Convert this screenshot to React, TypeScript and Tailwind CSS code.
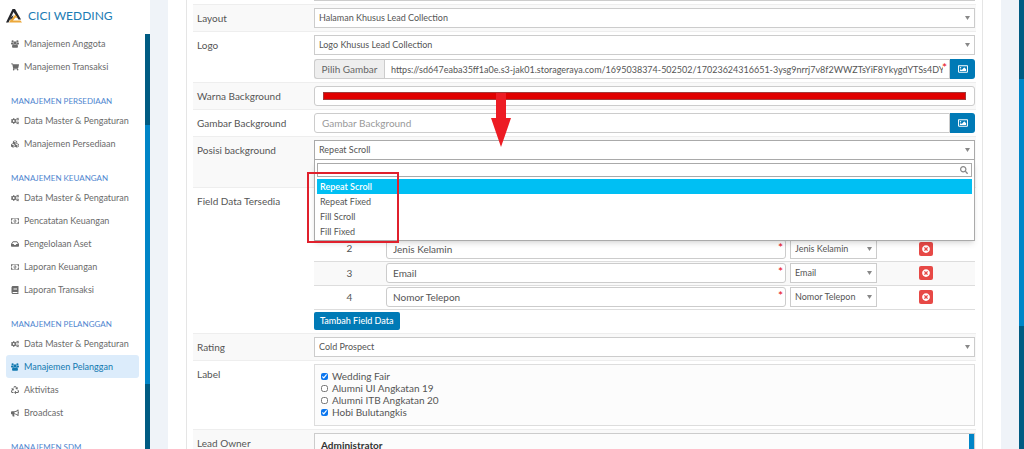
import React from "react";
import {
  FaBook,
  FaBullhorn,
  FaCogs,
  FaCubes,
  FaInbox,
  FaRecycle,
  FaRegImage,
  FaSearch,
  FaShoppingCart,
  FaTimesCircle,
} from "react-icons/fa";

interface IconProps {
  className?: string;
}

interface MenuItem {
  label: string;
  icon: React.ComponentType<IconProps>;
  active?: boolean;
}

interface MenuGroup {
  title?: string;
  items: MenuItem[];
}

const GroupIcon: React.FC<IconProps> = ({ className }) => (
  <svg viewBox="0 0 1920 1792" className={className} fill="currentColor">
    <path d="M593 896q-162 5-265 128h-134q-82 0-138-40.5t-56-118.5q0-353 124-353 6 0 43.500 21t97.500 42.500 119 21.500q67 0 133-23-5 37-5 66 0 139 81 256zm1071 637q0 120-73 189.500t-194 69.500h-874q-121 0-194-69.500t-73-189.500q0-53 3.500-103.500t14-109 26.500-108.500 43-97.500 62-81 85.500-53.500 111.500-20q10 0 43 21.500t73 48 107 48 135 21.500 135-21.500 107-48 73-48 43-21.500q61 0 111.500 20t85.500 53.500 62 81 43 97.500 26.500 108.500 14 109 3.500 103.500zm-1024-1277q0 106-75 181t-181 75-181-75-75-181 75-181 181-75 181 75 75 181zm704 384q0 159-112.500 271.500t-271.500 112.500-271.500-112.500-112.500-271.500 112.500-271.500 271.500-112.500 271.500 112.500 112.500 271.500zm576 225q0 78-56 118.500t-138 40.500h-134q-103-123-265-128 81-117 81-256 0-29-5-66 66 23 133 23 59 0 119-21.500t97.500-42.500 43.500-21q124 0 124 353zm-128-609q0 106-75 181t-181 75-181-75-75-181 75-181 181-75 181 75 75 181z" />
  </svg>
);

const MoneyIcon: React.FC<IconProps> = ({ className }) => (
  <svg viewBox="0 0 1920 1792" className={className} fill="currentColor">
    <path d="M768 1152h384v-96h-128v-448h-114l-148 137 77 80q42-37 55-57h2v288h-128v96zm512-256q0 70-21 142t-59.500 134-101.500 101-138 39-138-39-101.500-101-59.500-134-21-142 21-142 59.500-134 101.500-101 138-39 138 39 101.500 101 59.500 134 21 142zm512 256v-512q-106 0-181-75t-75-181h-1152q0 106-75 181t-181 75v512q106 0 181 75t75 181h1152q0-106 75-181t181-75zm128-832v1152q0 26-19 45t-45 19h-1792q-26 0-45-19t-19-45v-1152q0-26 19-45t45-19h1792q26 0 45 19t19 45z" />
  </svg>
);

const menu: MenuGroup[] = [
  {
    items: [
      { label: "Manajemen Anggota", icon: GroupIcon },
      { label: "Manajemen Transaksi", icon: FaShoppingCart },
    ],
  },
  {
    title: "MANAJEMEN PERSEDIAAN",
    items: [
      { label: "Data Master & Pengaturan", icon: FaCogs },
      { label: "Manajemen Persediaan", icon: FaCubes },
    ],
  },
  {
    title: "MANAJEMEN KEUANGAN",
    items: [
      { label: "Data Master & Pengaturan", icon: FaCogs },
      { label: "Pencatatan Keuangan", icon: MoneyIcon },
      { label: "Pengelolaan Aset", icon: FaInbox },
      { label: "Laporan Keuangan", icon: MoneyIcon },
      { label: "Laporan Transaksi", icon: FaBook },
    ],
  },
  {
    title: "MANAJEMEN PELANGGAN",
    items: [
      { label: "Data Master & Pengaturan", icon: FaCogs },
      { label: "Manajemen Pelanggan", icon: GroupIcon, active: true },
      { label: "Aktivitas", icon: FaRecycle },
      { label: "Broadcast", icon: FaBullhorn },
    ],
  },
  { title: "MANAJEMEN SDM", items: [] },
];

const fields = [
  { no: 2, name: "Jenis Kelamin", type: "Jenis Kelamin" },
  { no: 3, name: "Email", type: "Email" },
  { no: 4, name: "Nomor Telepon", type: "Nomor Telepon" },
];

const labels = [
  { name: "Wedding Fair", checked: true },
  { name: "Alumni UI Angkatan 19", checked: false },
  { name: "Alumni ITB Angkatan 20", checked: false },
  { name: "Hobi Bulutangkis", checked: true },
];

const positions = ["Repeat Scroll", "Repeat Fixed", "Fill Scroll", "Fill Fixed"];

const imageUrl =
  "https://sd647eaba35ff1a0e.s3-jak01.storageraya.com/1695038374-502502/17023624316651-3ysg9nrrj7v8f2WWZTsYiF8YkygdYTSs4DY";

const Logo = () => (
  <svg viewBox="0 0 32 28" className="h-[14px] w-4" aria-hidden="true">
    <path d="M13 0 H18 L30 21 H25 L15 6 L5 27 H0 Z" fill="#25262b" />
    <path d="M9 22 L19 11 L23 18 L19 17 L14 23 H29 L32 27 H6 Z" fill="#eca83a" />
    <path d="M9 17 L15 12 L13 18 L8 22 Z" fill="#25262b" />
  </svg>
);

const Sidebar = () => (
  <aside className="flex w-[150px] shrink-0 bg-white">
    <div className="min-w-0 flex-1 px-[6px]">
      <a href="#" className="flex h-8 items-center gap-[6px] text-[#1c7cb4]">
        <Logo />
        <span className="whitespace-nowrap text-[12px]">CICI WEDDING</span>
      </a>
      <nav>
        {menu.map((group, i) => (
          <div key={i}>
            {group.title && (
              <h2 className="h-[31px] whitespace-nowrap pl-[5px] pt-4 text-[8px] leading-[14px] text-[#4f86cf]">
                {group.title}
              </h2>
            )}
            {group.items.map((item) => (
              <a
                key={item.label}
                href="#"
                className={`flex h-[23px] items-center gap-[5px] whitespace-nowrap rounded-[3px] pl-[5px] text-[9px] ${
                  item.active ? "bg-[#dcecfb] text-[#1279b0]" : "text-[#6b6b6b]"
                }`}
              >
                <item.icon className="size-2 shrink-0" />
                {item.label}
              </a>
            ))}
          </div>
        ))}
      </nav>
    </div>
    <div className="flex w-[5px] flex-col pt-[34px]">
      <div className="h-[91px] bg-[#005b82]" />
      <div className="h-[259px] bg-[#0085c7]" />
      <div className="flex-1 bg-[#005b82]" />
    </div>
  </aside>
);

interface SelectProps {
  id?: string;
  label?: string;
  options: string[];
  border?: string;
}

const Select: React.FC<SelectProps> = ({
  id,
  label,
  options,
  border = "border-[#ccc]",
}) => (
  <div className="relative">
    <select
      id={id}
      aria-label={label}
      className={`block h-5 w-full appearance-none border bg-white pl-1 pr-4 text-[9px] text-[#555] ${border}`}
    >
      {options.map((o) => (
        <option key={o}>{o}</option>
      ))}
    </select>
    <span className="pointer-events-none absolute inset-y-0 right-[5px] flex items-center">
      <svg viewBox="0 0 5 4" className="h-1 w-[5px]" aria-hidden="true">
        <path d="M0 0 H5 L2.5 4 Z" fill="#888" />
      </svg>
    </span>
  </div>
);

interface RowProps {
  label: string;
  htmlFor?: string;
  striped?: boolean;
  className?: string;
  children: React.ReactNode;
}

const Row: React.FC<RowProps> = ({
  label,
  htmlFor,
  striped,
  className = "pb-[3px]",
  children,
}) => (
  <div
    className={`flex border-t border-[#eee] pr-px pt-[3px] ${
      striped ? "bg-[#f9f9f9]" : ""
    } ${className}`}
  >
    <label
      htmlFor={htmlFor}
      className="w-[121px] shrink-0 pl-1 text-[10px] leading-5 text-[#555]"
    >
      {label}
    </label>
    <div className="min-w-0 flex-1">{children}</div>
  </div>
);

const Required = () => (
  <span className="absolute right-[3px] top-[3px] text-[12px] leading-3 text-red-600">
    *
  </span>
);

const ImageButton = () => (
  <button
    type="button"
    aria-label="Pilih gambar"
    className="flex h-5 w-[25px] shrink-0 items-center justify-center rounded-r-[3px] bg-[#007ab6] text-white"
  >
    <FaRegImage className="size-[10px]" />
  </button>
);

const PositionDropdown = () => (
  <div className="absolute inset-x-0 top-full z-10 border border-t-0 border-[#aaa] bg-white px-[2px] pb-px pt-[3px] shadow-md">
    <div className="relative">
      <input
        aria-label="Cari posisi"
        className="block h-[14px] w-full border border-[#aaa] pl-1 pr-4 text-[9px] outline-none"
      />
      <FaSearch className="absolute right-1 top-[3px] size-2 text-[#888]" />
    </div>
    <ul className="mt-[2px]">
      {positions.map((p, i) => (
        <li
          key={p}
          className={`h-[15px] px-[3px] text-[9px] leading-[15px] ${
            i === 0 ? "bg-[#00bff3] font-semibold text-white" : "text-[#555]"
          }`}
        >
          {p}
        </li>
      ))}
    </ul>
    <div className="absolute -left-2 top-3 h-[71px] w-[92px] border-2 border-[#e0202c]" />
  </div>
);

const FieldTable = () => (
  <table className="mt-[46px] w-full table-fixed border-collapse text-[10px] text-[#555]">
    <colgroup>
      <col className="w-[71px]" />
      <col />
      <col className="w-[90px]" />
      <col className="w-[98px]" />
    </colgroup>
    <tbody>
      {fields.map((f) => (
        <tr
          key={f.no}
          className="h-6 border-b border-[#ddd] even:bg-[#f9f9f9]"
        >
          <td className="p-0 text-center">{f.no}</td>
          <td className="px-px py-0">
            <div className="relative">
              <input
                aria-label={`Nama field ${f.no}`}
                defaultValue={f.name}
                className="block h-5 w-full rounded-[3px] border border-[#ccc] bg-white px-[6px]"
              />
              <Required />
            </div>
          </td>
          <td className="py-0 pl-[3px] pr-0">
            <Select label={`Tipe field ${f.no}`} options={[f.type]} />
          </td>
          <td className="p-0">
            <button
              type="button"
              aria-label={`Hapus ${f.name}`}
              className="mx-auto flex size-[14px] items-center justify-center rounded-[2px] bg-[#e74946] text-white"
            >
              <FaTimesCircle className="size-2" />
            </button>
          </td>
        </tr>
      ))}
    </tbody>
  </table>
);

const LeadForm = () => (
  <form className="border-x border-[#e5e5e5] px-[6px]">
    <div className="flex pb-[3px] pl-[121px] pr-px">
      <div className="h-px flex-1 bg-[#ccc]" />
    </div>
    <Row label="Layout" htmlFor="layout" striped>
      <Select id="layout" options={["Halaman Khusus Lead Collection"]} />
    </Row>
    <Row label="Logo" htmlFor="logo">
      <Select id="logo" options={["Logo Khusus Lead Collection"]} />
      <div className="mt-1 flex text-[10px]">
        <label
          htmlFor="logo-url"
          className="h-5 w-[70px] shrink-0 rounded-l-[3px] border border-r-0 border-[#ccc] bg-[#eee] text-center leading-[18px] text-[#666]"
        >
          Pilih Gambar
        </label>
        <div className="relative min-w-0 flex-1">
          <input
            id="logo-url"
            defaultValue={imageUrl}
            className="block h-5 w-full border border-[#ccc] px-[6px] text-[9px] text-[#555]"
          />
          <Required />
        </div>
        <ImageButton />
      </div>
    </Row>
    <Row label="Warna Background" htmlFor="warna" striped>
      <div className="relative">
        <input
          id="warna"
          type="color"
          defaultValue="#e00000"
          className="block h-5 w-full rounded-[3px] border border-[#ccc] bg-white px-2 py-[5px] [&::-webkit-color-swatch-wrapper]:p-0 [&::-webkit-color-swatch]:border-[#a03c3c]"
        />
        <svg
          viewBox="0 0 20 54"
          className="absolute left-[28%] top-[7px] z-20 h-[54px] w-5 -translate-x-2"
          aria-hidden="true"
        >
          <path d="M5 0 H15 V25 H20 L10 54 L0 25 H5 Z" fill="#ed1c24" />
        </svg>
      </div>
    </Row>
    <Row label="Gambar Background" htmlFor="gambar">
      <div className="flex">
        <input
          id="gambar"
          placeholder="Gambar Background"
          className="block h-5 min-w-0 flex-1 rounded-l-[3px] border border-[#ccc] px-[7px] text-[10px] placeholder:text-[#999]"
        />
        <ImageButton />
      </div>
    </Row>
    <Row label="Posisi background" htmlFor="posisi" striped className="pb-[27px]">
      <div className="relative">
        <Select id="posisi" options={positions} border="border-[#aaa]" />
        <PositionDropdown />
      </div>
    </Row>
    <Row label="Field Data Tersedia">
      <FieldTable />
      <button
        type="button"
        className="mt-[2px] block h-[18px] rounded-[2px] bg-[#007ab6] px-[6px] text-[9px] font-medium text-white"
      >
        Tambah Field Data
      </button>
    </Row>
    <Row label="Rating" htmlFor="rating" striped>
      <Select id="rating" options={["Cold Prospect"]} />
    </Row>
    <Row label="Label">
      <div className="border border-[#ddd] bg-[#fcfcfc] px-[6px] py-[6px]">
        {labels.map((l) => (
          <label
            key={l.name}
            className="flex h-3 items-center gap-1 text-[10px] text-[#555]"
          >
            <input
              type="checkbox"
              defaultChecked={l.checked}
              className="size-[7px] accent-[#0b76ef]"
            />
            {l.name}
          </label>
        ))}
      </div>
    </Row>
    <Row label="Lead Owner" striped>
      <div className="flex h-20 border border-[#ccc] bg-[#fcfcfc]">
        <p className="flex-1 px-[6px] pt-[3px] text-[10px] font-bold leading-4 text-[#333]">
          Administrator
        </p>
        <div className="w-[5px] bg-[#0085c7]" />
      </div>
    </Row>
  </form>
);

const App = () => (
  <div className="flex h-screen overflow-hidden bg-[#eff3f8] font-['Lato','Liberation_Sans',sans-serif]">
    <Sidebar />
    <main className="min-w-0 flex-1 px-[18px]">
      <div className="min-h-full bg-white px-[18px]">
        <LeadForm />
      </div>
    </main>
    <div className="flex w-[5px] shrink-0 flex-col">
      <div className="h-[79px] bg-[#005b82]" />
      <div className="h-[247px] bg-[#0085c7]" />
      <div className="flex-1 bg-[#005b82]" />
    </div>
  </div>
);

export default App;
